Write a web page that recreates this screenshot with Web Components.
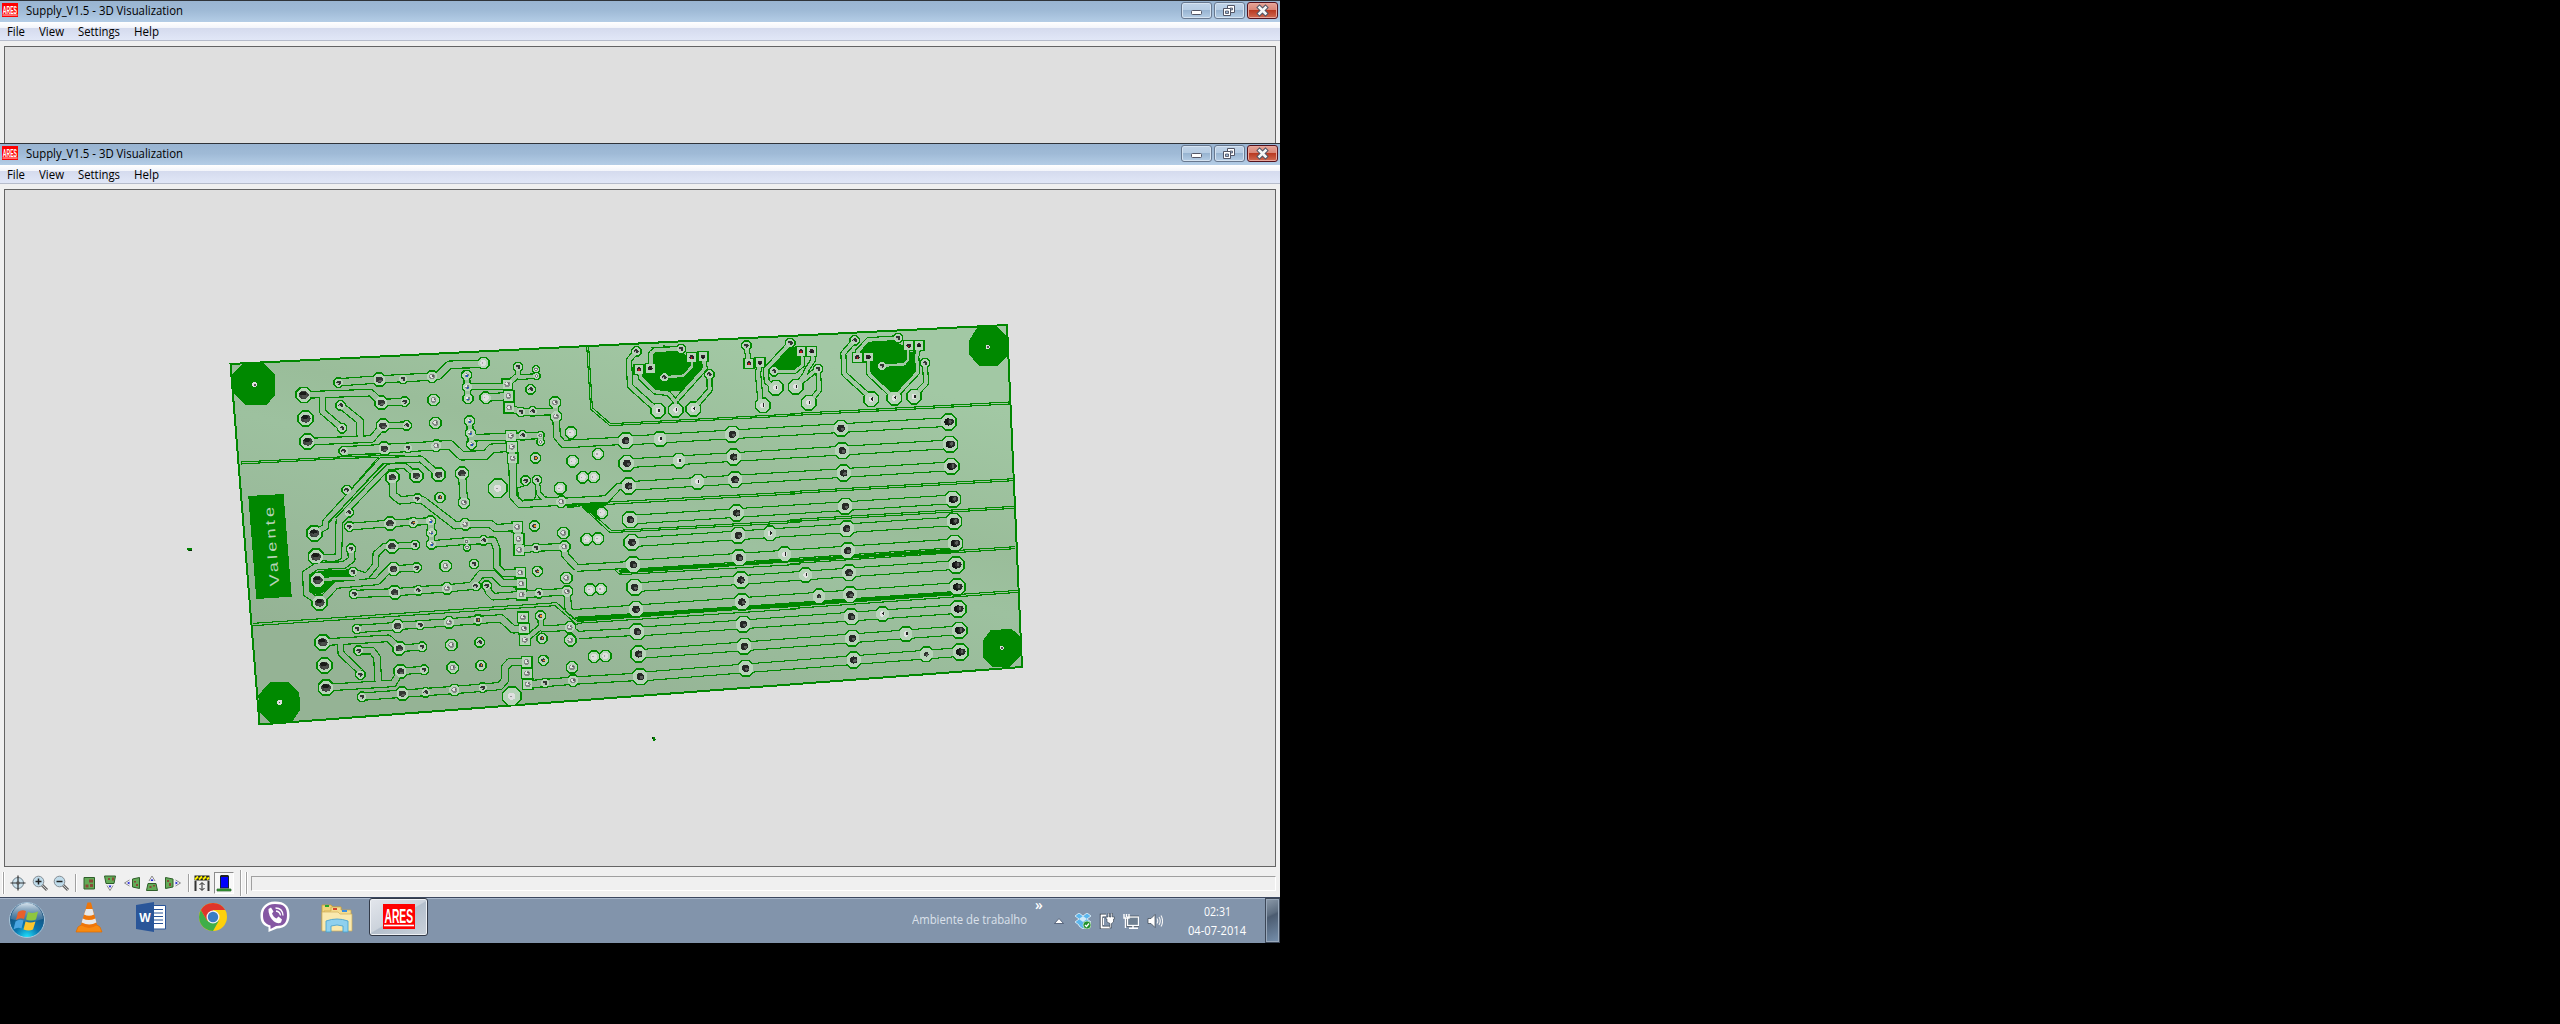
<!DOCTYPE html>
<html lang="pt">
<head>
<meta charset="utf-8">
<title>Supply_V1.5 - 3D Visualization</title>
<style>
html,body{margin:0;background:#000;height:100%;overflow:hidden}
body{font-family:"Open Sans","Noto Sans",sans-serif;font-size:12px;color:#000}
</style>
</head>
<body>
<desk-top>
  <ares-window style="height:143px"></ares-window>
  <ares-window style="height:754px" tools><pcb-board></pcb-board></ares-window>
  <task-bar></task-bar>
</desk-top>
<script>
class Base extends HTMLElement{
  constructor(){super();this.attachShadow({mode:'open'});}
  connectedCallback(){if(!this.done){this.done=true;this.shadowRoot.innerHTML=this.view();if(this.ready)this.ready();}}
}

customElements.define('desk-top',class extends Base{
  view(){return `<style>:host{display:flex;flex-direction:column;width:1280px;height:943px;overflow:hidden}</style><slot></slot>`}
});

/* A line of text squeezed or stretched to a given width. */
customElements.define('fit-text',class extends Base{
  view(){return `<style>:host{display:block;white-space:nowrap;flex:none;width:${this.getAttribute('width')}px;line-height:16px}
  span{display:inline-block;transform-origin:0 50%}</style><span><slot></slot></span>`}
  ready(){const s=this.shadowRoot.querySelector('span');s.style.transform='scaleX('+(+this.getAttribute('width')/s.getBoundingClientRect().width)+')';}
});

customElements.define('ares-logo',class extends Base{
  view(){return `<style>:host{display:block;flex:none}svg{display:block;width:100%;height:100%}text{font:bold 10px "Liberation Sans",sans-serif;fill:#fff}</style>
  <svg viewBox="0 0 32 25" preserveAspectRatio="none"><rect width="32" height="25" fill="#f00"/>
  <text transform="translate(1.500 19) scale(1.03 2.060)">ARES</text><path d="M1 21.500H31" stroke="#fff" stroke-width="1.600"/></svg>`}
});

customElements.define('caption-button',class extends Base{
  view(){
    const k=this.getAttribute('kind');
    const art={
      min:'<rect x="10.500" y="8.500" width="10" height="4" rx="1" fill="#fff" stroke="#535666"/>',
      max:'<path d="M13.500 3.500h7v7h-7z" fill="#fff" stroke="#535666"/><path d="M16 6h2.500v2H16z" fill="#9db9d6" stroke="#535666" stroke-width=".8"/><path d="M9.500 6.500h7v7h-7z" fill="#fff" stroke="#535666"/><path d="M11.500 9h3v2.500h-3z" fill="#9db9d6" stroke="#535666" stroke-width=".9"/>',
      close:'<path d="M12.500 5.500l6 6M18.500 5.500l-6 6" stroke="#535666" stroke-width="4.600" stroke-linecap="square"/><path d="M12.500 5.500l6 6M18.500 5.500l-6 6" stroke="#f6f6f6" stroke-width="2.600" stroke-linecap="square"/>'
    }[k];
    const c=k=='close';
    return `<style>:host{display:block;box-sizing:border-box;width:31px;height:17px;border-radius:3px;border:1px solid ${c?'#54121c':'#68788f'};
    box-shadow:inset 0 0 0 1px ${c?'#e8a79c':'#d5e3f1'};background:${c?'linear-gradient(#e5a497,#d98677 45%,#b93a22 50%,#cf6a52)':'linear-gradient(#c0d3e8,#b6cce3 45%,#98b4d1 50%,#b5cde5)'}}
    svg{display:block;margin:-1px}</style><svg width="31" height="17">${art}</svg>`}
});

customElements.define('tool-icon',class extends Base{
  view(){
    const n=this.getAttribute('name');
    const chip=(d)=>`<path d="${d}" fill="#64ab57" stroke="#2f5f2b"/>`;
    const lens=(s)=>`<path d="M10 10l5 5" stroke="#666" stroke-width="3"/><path d="M10 10l5 5" stroke="#c9c9c9" stroke-width="1"/><circle cx="6.500" cy="6.500" r="5.300" fill="#bfdbea" stroke="#848d94"/><path d="${s}" stroke="#222" stroke-width="1.500"/>`;
    const eye=(t)=>`<g transform="${t}"><path d="M-3 2.500L0-2.500L3 2.500" fill="#fff" stroke="#888"/><path d="M-1.500 2.500L0 0L1.500 2.500z" fill="#1b1bd0"/></g>`;
    const a={
      nav:'<circle cx="8" cy="8" r="5.500" fill="#cde3ee" stroke="#73848e"/><path d="M8 .5V15.500M.5 8H15.500" stroke="#303030" stroke-width="1.200"/><circle cx="8" cy="8" r="1.800" fill="#555"/>',
      zin:lens('M3.500 6.500h6M6.500 3.500v6'),zout:lens('M3.500 6.500h6'),
      top:chip('M3 2.500h10.500v11.500h-10.500z')+'<path d="M8 4.500h4v3H8zM4.500 9.500h3v3h-3zM9 9H12v3H9z" fill="#8a4a37"/>',
      front:chip('M2.500 1h11l-1.500 7.500h-8z')+'<path d="M6 3h2v2H6zM10 2.500h2v3h-2z" fill="#8a4a37"/>'+eye('translate(8 13) rotate(180)'),
      left:chip('M8.500 4l7-1.500v11l-7-1.500z')+'<path d="M10 6h2v1.500h-2zM12 9h2v2h-2z" fill="#8a4a37"/>'+eye('translate(3 8) rotate(-90)'),
      back:chip('M4 8.500h8l1.500 7h-11z')+'<path d="M5.500 11h2v2h-2zM9 10h2v1.500H9z" fill="#8a4a37"/>'+eye('translate(8 3.500)'),
      right:chip('M.5 2.500L8 4v8L.5 13.500z')+'<path d="M2 5h2v2H2zM4 8h2v3H4z" fill="#8a4a37"/>'+eye('translate(13 8) rotate(90)'),
      height:'<path d="M.5 .5h15v5H.5z" fill="#222"/><path d="M1 4.500l3-3M5 4.500l3-3M9 4.500l3-3M13 4.500l2-2" stroke="#fbf000" stroke-width="2"/><path d="M1.500 6v10M14.500 6v10" stroke="#333" stroke-width="2"/><path d="M8 8v7M5.500 10L8 7.500L10.500 10M5.500 13L8 15.500L10.500 13" fill="none" stroke="#222"/>',
      comp:'<rect x="4.500" y="1" width="8" height="12" fill="#00f" stroke="#123"/><path d="M5 1h7" stroke="#222" stroke-width="2"/><path d="M1 14h14v2H1z" fill="#35a035" stroke="#245c24" stroke-width=".7"/>'
    }[n];
    return `<style>:host{display:block;flex:none;width:16px;height:16px}svg{display:block;overflow:visible}</style><svg width="16" height="16" fill="none">${a}</svg>`}
});

customElements.define('tool-strip',class extends Base{
  view(){const t=(n,m)=>`<tool-icon name="${n}" style="margin-left:${m}px"></tool-icon>`;
  return `<style>:host{display:flex;align-items:center;height:30px;padding-top:1px;box-sizing:border-box;background:#f0f0f0;flex:none}
  i{display:block;width:1px;height:18px;background:#a0a0a0;border-right:1px solid #fff;flex:none}
  .g{height:22px;border-left:1px solid #fff;background:#a0a0a0}
  .on{box-sizing:border-box;width:20px;height:22px;border:1px solid #8c8c8c;border-right-color:#fff;border-bottom-color:#fff;background:#f8f8f8;padding:2px 1px;margin-left:4px}
  .st{box-sizing:border-box;flex:1;height:15px;border:1px solid #a0a0a0;border-right-color:#fff;border-bottom-color:#fff;margin:1px 4px 0 3px}</style>
  <i class="g" style="margin-left:2px"></i>${t('nav',5)}${t('zin',6)}${t('zout',5)}<i style="margin-left:6px"></i>${t('top',4)}${t('front',5)}${t('left',6)}${t('back',4)}${t('right',5)}<i style="margin-left:7px"></i>${t('height',4)}
  <div class="on">${t('comp',0)}</div><i style="height:26px;margin-left:6px"></i><i class="g" style="margin-left:3px"></i><div class="st"></div>`}
});

customElements.define('ares-window',class extends Base{
  view(){return `<style>:host{display:flex;flex-direction:column;overflow:hidden;flex:none;background:#f0f0f0;box-sizing:border-box;border-top:1px solid #2f3338}
  .t{display:flex;height:21px;flex:none;background:linear-gradient(#99b4d1,#9fbad6 45%,#b4cde6);padding:0 2px;box-sizing:border-box;align-items:flex-start}
  ares-logo{width:16px;height:14px;margin:2px 8px 0 0}
  .t fit-text{margin-top:2px}.sp{flex:1}.b{display:flex;gap:2px;margin-top:1px}
  .m{display:flex;height:18px;flex:none;box-sizing:content-box;border-bottom:1px solid #b6bccb;background:linear-gradient(#fff,#f2f4fa 34%,#d5dbee 36%,#e1e7f7);padding-left:7px;gap:14px}
  .m fit-text{margin-top:2px}
  .v{flex:1;min-height:0;margin:5px 4px 0;background:#dfdfdf;border:1px solid #646464;position:relative;overflow:hidden}
  :host(:not([tools])) .v{border-bottom:0}</style>
  <div class="t"><ares-logo></ares-logo><fit-text width="157">Supply_V1.5 - 3D Visualization</fit-text><div class="sp"></div><div class="b"><caption-button kind="min"></caption-button><caption-button kind="max"></caption-button><caption-button kind="close"></caption-button></div></div>
  <div class="m"><fit-text width="18">File</fit-text><fit-text width="25">View</fit-text><fit-text width="42">Settings</fit-text><fit-text width="25">Help</fit-text></div>
  <div class="v"><slot></slot></div>${this.hasAttribute('tools')?'<tool-strip></tool-strip>':''}`}
});

/* The board: every region lists its copper in its own third-of-a-pixel grid. */
const A=[220,340],B=[220,530],G=[560,310],H=[560,530],I=[790,310],J=[790,530];
const pads=[
[A,'b',[251,165,257,236,263,305,283,580]],
[B,'b',[288,80,293,150,299,218,308,337,313,407,318,473]],
[A,'m',[478,119,484,188,489,257,493,326,517,412,589,407,656,404,726,400,510,550]],
[B,'m',[516,49,520,117,524,187,532,288,538,355,542,424,547,491]],
[A,'s',[356,128,549,117,362,196,554,185,366,265,560,256,371,333,564,323,380,450,386,517,388,560,592,476,894,81,903,216,938,214,908,286,917,422,951,421,932,148]],
[B,'s',[393,56,585,45,399,126,590,113,403,192,595,181,411,297,601,285,416,362,606,350,421,434,612,419,426,500,617,487,791,31,762,102,767,168,800,167,779,337,788,473,948,54,957,190,975,459]],
[A,'o',[580,548,660,472,943,558,947,354]],
[B,'o',[774,270,783,406,952,124,961,258,966,325,970,391]],
[A,'u',[740,106,742,141,744,176,749,243,751,279,755,313,632,543,634,578]],
[B,'u',[635,42]],
[A,'v',[636,110,641,180,646,249,649,317,1005,188,1008,229,1021,444,1024,485,732,488,736,553,1030,579]],
[B,'v',[677,108,681,175,687,277,694,345,698,413,703,480,1033,50,1039,144,1041,185,1049,292,1051,331,1056,412,1059,452]],
[A,'w',[790,69,797,173,1053,278,1058,363]],
[A,'t',[948,88,949,108,961,286,962,306]],[B,'t',[740,34,741,52]],
[A,'W',[833,445]],[B,'W',[875,499]],
[A,'q',[862,133,866,168,868,203,873,288,876,321,878,355,892,561,896,597]],
[B,'q',[898,60,901,128,904,161,905,194,909,262,912,296,915,330,920,396,921,430,923,463]],
[G,'h',[197,392,201,460,206,528,211,629,216,697,517,373,521,441,525,509,530,609,535,676]],
[H,'h',[220,104,224,172,228,238,232,305,236,372,241,440,538,83,543,150,546,216,550,283,553,349,557,415]],
[I,'h',[153,355,157,422,161,489,166,589,170,656]],[J,'h',[173,62,177,128,180,194,184,260,187,325,191,390]],
[I,'r',[475,336,479,403,483,469,488,568,491,634]],[J,'r',[494,40,498,105,501,171,504,237,507,301,510,366]],
[G,'c',[300,387,357,452,413,515,630,670,294,302,347,300,400,297,608,286,647,233,707,230]],
[H,'c',[674,73]],[J,'c',[47,135,277,252,348,312]],[J,'d',[87,199,409,373]],
[I,'c',[56,278,244,268,313,264,372,260]],
[G,'w',[114,432,38,454,68,502,101,501,0,535,125,608,80,688,114,686]],[H,'w',[90,179,123,177,102,380,136,378]],
[G,'s',[229,124,363,117,448,193,313,202,559,107,691,99,642,184]],
[I,'s',[84,177,194,91,324,84,276,167,405,160]],
[G,'Q',[237,178,271,175,395,142,429,140,567,160,600,158]],
[I,'Q',[33,124,65,124,202,142,235,141,356,107,387,106]]
];
/* region, width, points */
const tracks=[
[A,20,'356,127 478,118 636,110 654,108 688,74 790,72'],[A,18,'251,165 452,158 484,188 554,185'],
[A,16,'308,166 308,215 366,265'],[A,18,'362,196 420,243 421,297'],[A,18,'263,305 455,297 489,257 560,256'],
[A,24,'371,333 493,326 649,317 690,314 725,347 797,345 815,325 876,321'],
[A,16,'740,106 742,141 744,176'],[A,16,'742,141 862,138'],[A,20,'797,173 866,168'],
[A,14,'862,133 895,105 894,81'],[A,12,'895,112 949,108'],[A,18,'868,203 903,216 1000,215 1008,229'],
[A,18,'1005,188 1008,229 1011,290 1030,313 1080,311'],[G,20,'10,402 197,392'],
[A,16,'749,243 751,279 755,313'],[A,18,'751,279 765,293 873,290 961,286 962,306'],
[A,20,'876,321 880,470 900,492 1024,485'],[G,18,'4,575 140,567 175,530 206,528'],
[A,12,'951,421 956,460 972,478 1024,480'],[A,20,'517,412 520,465 540,481 592,476 610,482 706,556 736,553 812,552 826,564 892,561'],
[A,16,'656,404 602,357 484,362 317,545 317,560 283,580'],[A,14,'589,407 555,378 505,380 352,540'],
[A,18,'386,517 358,545 355,650 340,655 288,650'],[A,20,'726,400 732,488'],[A,18,'388,560 510,550 632,543 634,578 635,612'],
[A,22,'892,561 896,597 898,630'],
[B,18,'393,56 395,88 372,105 290,109 258,130 260,190 299,218'],
[B,16,'399,126 440,138 467,105 468,72 492,50 516,49 585,45'],[B,11,'293,150 330,147 436,143'],[B,18,'299,218 348,165 472,154 505,120 520,117 590,113'],
[B,20,'403,192 524,187 595,181 681,175 755,168 782,133 820,132 847,158 904,161'],
[B,18,'635,42 740,33 820,31 830,55 830,110 850,130 901,128'],
[B,18,'800,167 806,186 820,200 905,194 957,190 1041,185 1045,238 1056,250'],[H,24,'36,252 228,238'],
[B,18,'898,60 948,54 1033,50 1035,75 1070,113'],[H,18,'50,114 220,104'],
[B,20,'411,297 532,288 687,277 774,270 843,265 880,298 912,296'],[B,14,'961,258 963,290 915,330'],[B,16,'963,297 1049,292 1075,315'],
[H,20,'55,315 232,305'],[B,18,'308,337 505,325 538,355 606,350'],[B,16,'362,340 363,370 421,425'],
[B,18,'416,362 456,362 471,382 475,458'],[B,18,'318,473 520,460 542,424 612,419'],
[B,20,'426,500 547,491 703,480 788,473 840,468 855,450 855,412 870,396 920,396'],[B,20,'923,463 975,459 1059,452'],[H,20,'39,452 241,440'],
[G,13,'271,175 274,130 285,120 363,117'],[G,9,'313,202 370,197 396,170 396,142'],
[G,12,'237,178 243,205 285,245 325,250 347,275 347,300'],[G,12,'429,140 435,175 350,270'],[G,14,'229,124 207,150 210,228 290,300'],[G,13,'448,193 449,240 402,295'],
[G,13,'559,107 567,160'],[G,14,'600,158 594,190 602,280'],[G,13,'691,99 618,178 620,215 645,235'],[G,10,'642,184 705,184 728,165 725,125'],
[I,12,'65,124 70,150 50,180 46,192 18,229'],[I,12,'84,177 88,240 60,275'],[I,12,'78,180 22,225'],
[I,13,'194,91 160,130 163,192 244,265'],[I,12,'202,142 204,122 235,90 324,84'],[I,11,'235,141 237,192 305,256'],[I,9,'276,167 342,163 354,150 354,107'],
[I,11,'387,106 380,140 383,187 320,255'],[I,13,'405,160 408,220 375,255']
];
const fills=[
[A,'70,68 130,68 165,103 165,165 140,195 78,195 40,160 35,105'],[B,'150,457 207,457 238,487 240,540 215,577 150,579 118,545 115,495'],
[I,'563,50 622,50 655,85 656,135 625,167 567,167 538,135 538,90'],[J,'602,300 665,297 692,320 692,378 660,410 610,412 580,385 580,330'],
[B,'268,165 275,132 300,122 390,118 394,138 345,155 320,182 295,194 268,188'],
[G,'285,125 350,122 365,130 430,155 438,175 365,242 290,242 235,195 270,185'],[G,'690,112 722,112 722,165 705,178 665,178 632,172'],
[I,'240,94 310,92 345,110 352,130 383,120 380,190 313,252 237,190 237,155 208,126'],
[G,'68,588 148,584 125,590 110,628'],[G,'18,579 145,574 145,582 18,588'],
[A,'385,338 480,333 480,343 385,347']
];
const lines=[
[A,'62,366 355,351 480,347 605,349'],[A,'62,372 380,355 475,352 395,445'],[A,'917,436 893,444 895,473 906,483 938,482 947,470 947,435'],[A,'490,372 326,546 325,560'],[A,'1040,502 1080,500'],
[B,'100,280 1010,218 1072,274'],[B,'100,287 1005,227 1072,285'],
[G,'80,108 92,298 150,347 720,316'],[G,'86,108 97,293 152,341 720,311'],[I,'0,311 657,276'],[I,'0,317 657,282'],
[G,'20,583 720,545'],[G,'20,590 720,551'],[I,'0,545 672,506'],[I,'0,551 672,512'],
[G,'66,590 150,668 720,637'],[G,'72,588 155,662 720,631'],[I,'0,629 672,589'],[I,'0,635 672,595'],
[H,'165,120 180,134 720,103'],[J,'0,94 675,50'],[J,'0,101 675,56'],[H,'50,280 720,236'],[H,'45,265 720,229'],[J,'0,228 685,181'],[J,'0,236 685,187'],
[G,'272,112 312,112 312,106']
];
customElements.define('pcb-board',class extends Base{
  view(){
    const X=(r,x)=>(r[0]+x/3).toFixed(2),Y=(r,y)=>(r[1]+y/3).toFixed(2);
    const pts=(r,s)=>s.split(' ').map(p=>{const[a,b]=p.split(',');return X(r,a)+','+Y(r,b)}).join(' ');
    const R={b:21,m:18,s:12,o:13,u:13,v:15,w:15,t:9,W:26,q:14,h:22,r:22,c:20,d:20,Q:13};
    let o1='',o2='',o3='',o4='';
    tracks.forEach(([r,w,s])=>{const p=pts(r,s);
      o1+=`<polyline points="${p}" stroke="#008a00" stroke-width="${(w+5.5)/3}"/>`;
      o2+=`<polyline points="${p}" stroke="url(#bd)" stroke-width="${(w-1.5)/3}"/>`});
    const lp=[[G,197,392],[G,201,460],[G,206,528],[G,211,629],[G,216,697],[H,220,104],[H,224,172],[H,228,238],[H,232,305],[H,236,372],[H,241,440]];
    const mp=[[G,517,373],[G,521,441],[G,525,509],[G,530,609],[G,535,676],[H,538,83],[H,543,150],[H,546,216],[H,550,283],[H,553,349],[H,557,415]];
    const rp=[[I,475,336],[I,479,403],[I,483,469],[I,488,568],[I,491,634],[J,494,40],[J,498,105],[J,501,171],[J,504,237],[J,507,301],[J,510,366]];
    lp.forEach((l,i)=>{const p=[l,mp[i],rp[i]].map(a=>X(a[0],a[1])+','+Y(a[0],a[2])).join(' ');
      o1+=`<polyline points="${p}" stroke="#008a00" stroke-width="9.800"/>`;o2+=`<polyline points="${p}" stroke="url(#bd)" stroke-width="7.600"/>`});
    const oct=(x,y,q)=>{let s='';for(let i=0;i<8;i++){const t=(i+.5)*Math.PI/4;s+=(x+q*1.05*Math.cos(t)).toFixed(2)+','+(y+q*1.05*Math.sin(t)).toFixed(2)+' '}return s};
    pads.forEach(([r,k,a])=>{for(let i=0;i<a.length;i+=2){
      const x=+X(r,a[i]),y=+Y(r,a[i+1]),q=R[k]/3;
      if(k=='q'||k=='Q'){o1+=`<rect x="${x-q-1.2}" y="${y-q-1.2}" width="${2*q+2.4}" height="${2*q+2.4}" fill="#008a00"/>`;o3+=`<rect x="${x-q}" y="${y-q}" width="${2*q}" height="${2*q}"/>`}
      else{o1+=`<polygon points="${oct(x,y,q+1.5)}" fill="#008a00"/>`;o3+=`<polygon points="${oct(x,y,q)}"/>`}
      const e=(rx,ry,f,dx=0,dy=0)=>{o4+=`<ellipse cx="${x+dx}" cy="${y+dy}" rx="${rx}" ry="${ry}" fill="${f}"/>`};
      if(k=='b'){e(5,4,'#3c3f3c');e(3.5,1.8,'#191b19',-.8,-1.6);e(3,1.5,'#4c4f4c',1,1.5)}
      else if(k=='m'){e(3.7,3.1,'#343734');e(2,1.2,'#5c5f5c',.9,1.4)}
      else if(k=='h'){e(3.7,3.6,'#262826');e(1.8,1.5,'#5b5d5b',1.200,.8)}
      else if(k=='r'){e(4,3.6,'#151615');e(3.2,3,'#292b29',2.400,-.3);e(1.300,2,'#5b5d5b',2,-.4)}
      else if(k=='s'){e(2.4,2.1,'#333633');e(1.1,1,'#b9bcb9',-1,1)}
      else if(k=='Q'){e(2.4,2.2,'#30222a');e(.8,.8,(i%4?'#151515':'#d01818'),0,.8)}
      else if(k=='o'){e(2.2,2,'#3c3f3c');e(1,.9,'#f28a18',.5,0)}
      else if(k=='u'){e(2.2,2,'#78847e');e(1.1,1,'#2155c4',.3,.8);e(1,.8,'#eee',-1,-.8)}
      else if(k=='v'||k=='q'){e(2.9,2.7,'#858986');e(1.6,1.6,'#e4e4e4',-.4,-.4);e(.8,.8,'#5a5d5b',1,-.6)}
      else if(k=='w'){e(3,3.2,'#dedede');e(.7,.7,'#aaa',-1,0)}
      else if(k=='W'){e(3.7,3.5,'#e0e0e0');e(.8,.8,'#999',-.8,0)}
      else if(k=='t'){e(1.9,1.7,'#767a77');e(.8,.8,'#eee')}
      else if(k=='c'){e(2.4,2.7,'#e4e4e4');e(.8,1.8,'#222',.9,-.3)}
      else if(k=='d'){e(2.3,2.3,'#2e302e');e(.9,.9,'#5f625f',.6,.5)}
    }});
    const f=fills.map(([r,s])=>`<polygon points="${pts(r,s)}"/>`).join('');
    const ln=lines.map(([r,s])=>`<polyline points="${pts(r,s)}"/>`).join('');
    const edge='230.500,364 1007,325 1022,667 259.500,724.500';
    return `<style>:host{display:block;width:1270px;height:677px}svg{display:block}text{font:13.500px "Liberation Sans",sans-serif;fill:#b7d3b9}</style>
    <svg width="1270" height="677" viewBox="5 190 1270 677" fill="none" shape-rendering="crispEdges">
    <defs><linearGradient id="bd" gradientUnits="userSpaceOnUse" x1="700" y1="330" x2="600" y2="710"><stop offset="0" stop-color="#a2c8a4"/><stop offset=".35" stop-color="#9abd9a"/><stop offset=".5" stop-color="#9dc19f"/><stop offset="1" stop-color="#95b395"/></linearGradient></defs>
    <polygon points="${edge}" fill="url(#bd)" stroke="#008800" stroke-width="2"/>
    <g fill="#008900">${f}</g><g stroke-linejoin="round">${o1}</g><g stroke-linejoin="round">${o2}</g>
    <g stroke="#008a00" stroke-width="1.100">${ln}</g>
    <g fill="#008700"><polygon points="${pts(H,'175,119 545,98 720,84 720,95 545,107 180,131')}"/><polygon points="${pts(J,'0,88 490,56 490,67 0,97')}"/><polygon points="${pts(H,'48,260 545,229 720,217 720,230 545,239 52,276')}"/><polygon points="${pts(J,'0,219 490,185 490,196 0,231')}"/>
    <polygon points="${pts(A,'858,306 866,306 866,335 858,335')}"/><polygon points="248.300,496 283.600,494 291.700,596.700 256.300,599"/></g>
    <g fill="#b7d3b9">${o3}</g>${o4}
    <g fill="#ddd"><circle cx="254.500" cy="384.800" r="2.500"/><circle cx="279.700" cy="702.300" r="2.500"/><circle cx="987.800" cy="347" r="2"/><circle cx="1001.800" cy="647.800" r="2"/></g>
    <g fill="#555"><path d="M254 384h2v2h-2zM279 702h1v1h-1zM987 346h2v2h-2zM1001 647h2v2h-2z"/></g>
    <text transform="translate(279.200 586) rotate(-94) scale(1.350 1)" textLength="59" lengthAdjust="spacing">Valente</text>
    <path d="M187 548h5v3h-4v-1h-1zM652 737h3v2h1v1h-1v1h-2v-2h-1z" fill="#008000"/><path d="M189 550h3v1h-3zM652 737h1v2h-1z" fill="#012b01"/></svg>`}
});

customElements.define('task-icon',class extends Base{
  view(){
    const a={
      start:'<defs><radialGradient id="o" cx=".5" cy="1" r=".9"><stop offset="0" stop-color="#1fe4ff"/><stop offset=".4" stop-color="#0b75ad"/><stop offset="1" stop-color="#16446f"/></radialGradient><linearGradient id="s" x2="0" y2="1"><stop stop-color="#d6e4ee"/><stop offset="1" stop-color="#5d87a8" stop-opacity=".4"/></linearGradient></defs><circle cx="18" cy="18" r="17.500" fill="url(#o)" stroke="#a9c6da"/><path d="M2 17a16 16 0 0 1 32 0q-16 5-32 0z" fill="url(#s)"/><path d="M9 10q4-3 8-1l-2 8q-4-2-8 1z" fill="#e9602a"/><path d="M19 10q5 2 10-.5l-2 8q-5 2-10 0z" fill="#8fc63f"/><path d="M6.500 19.500q4-3 8-1l-2 8q-4-2-8 1z" fill="#4aa5e2"/><path d="M16.500 19.500q5 2 10 0l-2.500 8q-4 2-9.500 0z" fill="#fdc62d"/>',
      vlc:'<path d="M5 23L2 25L0 30H26L24 25L21 23z" fill="#f88a10" stroke="#de6c00" stroke-width=".7"/><path d="M11.500 0.500h3.500L21 23q-8 6-16 0z" fill="#ef7608"/><path d="M10 7h6.500l1.500 5.500q-5 2.500-10 0zM6.700 16.500q6 3 12.700 0l1 4q-7 4-14.700 0z" fill="#e7e9ea"/>',
      word:'<path d="M16 3.500h13.500v23.500H16z" fill="#fff" stroke="#295499"/><path d="M18 7.500h9M18 11h9M18 14.500h9M18 18h9M18 21.500h9" stroke="#295499" stroke-width="1.200"/><path d="M0 3L18 0V30L0 27z" fill="#2a5699"/><text x="3.200" y="20" textLength="11.500" lengthAdjust="spacingAndGlyphs" style="font:bold 13px \'Liberation Sans\',sans-serif;fill:#fff">W</text>',
      chrome:'<circle cx="14" cy="14" r="14" fill="#fdd00b"/><path d="M1.900 7A14 14 0 0 0 14 28L20 17.500L14 20L8 17.500z" fill="#3fae49"/><path d="M1.900 7L8 17.500L14 14L14 7H26.200A14 14 0 0 0 1.900 7z" fill="#df352b"/><circle cx="14" cy="14" r="6.500" fill="#f3f3f3"/><circle cx="14" cy="14" r="5.200" fill="#3a7cc4"/>',
      viber:'<path d="M15 0.500C25 .5 29.500 5 29.500 14S25 27 17 27.500L8.500 31V26C2 24 .5 20 .5 14S5 .5 15 .5z" fill="#fff"/><path d="M15 3C24 3 27 6 27 14S24 25 16 25L10.500 28V24.500C4 22.500 3 19 3 14S6 3 15 3z" fill="#8557a3"/><path d="M8.500 8l2.500-1.500 2.500 4-1.500 2q1.500 4 4.500 5l2-2 3.500 3-1 3q-3 2-7-1Q8 15 8.500 8z" fill="#fff"/><path d="M15.500 7q7 0 7.500 7.500M16 10q4 .5 4.500 4.500" fill="none" stroke="#fff" stroke-width="1.300"/>',
      folder:'<path d="M1 2h9l2 2h8v23H1z" fill="#f2d57c" stroke="#c79e37" stroke-width=".8"/><path d="M4 2h4v2H4z" fill="#27a52b"/><path d="M10 4h10v3h10v20H3V8h7z" fill="#f5dd90" stroke="#caa548" stroke-width=".7"/><path d="M12 5h4v2h-4z" fill="#d7452e"/><path d="M21 7h5v2h-5z" fill="#3c8fe0"/><path d="M1 9h16l2 2h12v17H1z" fill="#f9e9ae" stroke="#d0b05a" stroke-width=".7"/><path d="M5 18q11-4 22 0v11h-5v-6q-6-2-12 0v6H5z" fill="#8ed0ee" stroke="#4ba4cf" stroke-width=".9"/>'
    }[this.getAttribute('name')];
    return `<style>:host{display:block;flex:none}svg{display:block;overflow:visible}</style><svg width="32" height="36">${a}</svg>`}
});

customElements.define('tray-icon',class extends Base{
  view(){
    const a={
      up:'<path d="M3.500 10.500L8 5.500L12.500 10.500z" fill="#fff" stroke="#43516a" stroke-width=".8"/>',
      drop:'<path d="M0 3l4-3 4 3 4-3 4 3-4 3 4 3-4 3v1l-4 3-4-3v-1L0 9l4-3z" fill="#5cb6ec" stroke="#e7f5fd" stroke-width=".8"/><path d="M4 6l4-3 4 3-4 3z" fill="#cfeaf8"/><circle cx="12" cy="12" r="4" fill="#23912e" stroke="#d2eed2" stroke-width=".7"/><path d="M10 12l1.500 1.500L14 10.500" stroke="#fff" fill="none" stroke-width="1.300"/>',
      plug:'<path d="M7 2.500H2.500v12H11" fill="none" stroke="#333c49" stroke-width="3.400"/><path d="M7 2.500H2.500v12H11" fill="none" stroke="#fff" stroke-width="1.800"/><path d="M4.500 5v7" stroke="#fff"/><path d="M7 4h2V0h1.500v4H12V0h1.500v4H15.500v2h-1v3l-2 1.500V15h-1.500v-4.500L8 9V6H7z" fill="#fff" stroke="#333c49" stroke-width=".6"/>',
      net:'<rect x="4.500" y="4" width="11" height="8.500" fill="#6f8091" stroke="#39434f" stroke-width="2.600"/><rect x="4.500" y="4" width="11" height="8.500" fill="#6f8091" stroke="#fff" stroke-width="1.300"/><path d="M1 1v4h1.500v10M6 1v4H1M3.500 1v3M6 15.300h9M10 13v2" stroke="#fff" fill="none" stroke-width="1.400"/>',
      snd:'<path d="M1 5.500h3L8 1.500v13L4 10.500H1z" fill="#fff" stroke="#39434f" stroke-width=".7"/><path d="M10 5.500q1.500 2.500 0 5M12 4q2.500 4 0 8M14 2.500q3.200 5.500 0 11" stroke="#f4f4f4" fill="none" stroke-width="1.100"/>'
    }[this.getAttribute('name')];
    return `<style>:host{display:block;flex:none;width:16px;height:16px}svg{display:block}</style><svg width="16" height="16">${a}</svg>`}
});

customElements.define('task-bar',class extends Base{
  view(){return `<style>:host{display:flex;box-sizing:border-box;height:46px;flex:none;background:#8294ab;border-top:1px solid #3b4860;box-shadow:inset 0 1px #a9b8cd;color:#fff;align-items:flex-start}
  .a{box-sizing:border-box;width:59px;height:38px;margin:0 0 0 1px;border:1px solid #323a48;border-radius:3px;box-shadow:inset 0 0 0 1px #eef1f5;background:linear-gradient(150deg,#e3e6ec,#ccd3dc 49%,#b4bfcc 51%,#c9d1da);padding:5px 12px 5px 13px}
  .a ares-logo{width:32px;height:25px}.sp{flex:1}
  .d{color:#dbe1ea;margin:14px 8px 0 0}.q{font-size:14px;line-height:14px;width:10px;font-weight:600;margin:0 6px 0 0}
  .c{display:flex;flex-direction:column;align-items:center;gap:3px;margin:6px 19px 0 0;width:58px}
  .s{box-sizing:border-box;width:15px;height:45px;border:1px solid #3c4757;box-shadow:inset 0 0 0 1px #99a8ba;background:linear-gradient(155deg,#8c9aaa,#5d6d80 35%,#4b5b70 40%,#7690ad)}
  tray-icon{margin-top:15px}</style>
  <task-icon name="start" style="width:36px;margin:4px 31px 0 9px"></task-icon>
  <task-icon name="vlc" style="width:26px;margin:4px 34px 0 0"></task-icon>
  <task-icon name="word" style="width:30px;margin:4px 33px 0 0"></task-icon>
  <task-icon name="chrome" style="width:28px;margin:5px 33px 0 0"></task-icon>
  <task-icon name="viber" style="width:30px;margin:3px 31px 0 0"></task-icon>
  <task-icon name="folder" style="width:32px;margin:5px 15px 0 0"></task-icon>
  <div class="a"><ares-logo></ares-logo></div><div class="sp"></div>
  <fit-text class="d" width="115">Ambiente de trabalho</fit-text><div class="q">»</div>
  <tray-icon name="up" style="margin-right:8px"></tray-icon><tray-icon name="drop" style="margin-right:8px"></tray-icon><tray-icon name="plug" style="margin-right:8px"></tray-icon><tray-icon name="net" style="margin-right:8px"></tray-icon><tray-icon name="snd" style="margin-right:25px"></tray-icon>
  <div class="c"><fit-text width="27">02:31</fit-text><fit-text width="58">04-07-2014</fit-text></div><div class="s"></div>`}
});
</script>
</body>
</html>
